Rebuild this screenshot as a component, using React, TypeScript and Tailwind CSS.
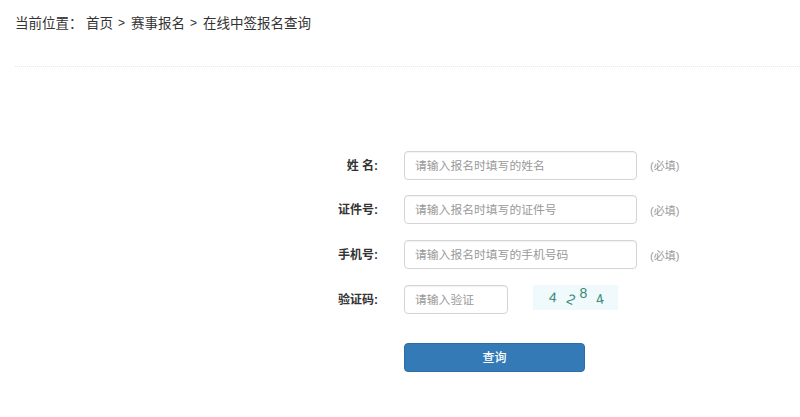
const fontStack = { fontFamily: '"Liberation Sans", "Noto Sans CJK SC", sans-serif' };

const rows = [
  { label: "姓 名:", placeholder: "请输入报名时填写的姓名", gap: "mt-0", note: "mt-[2px]" },
  { label: "证件号:", placeholder: "请输入报名时填写的证件号", gap: "mt-[15px]", note: "mt-[3px]" },
  { label: "手机号:", placeholder: "请输入报名时填写的手机号码", gap: "mt-4", note: "mt-[3px]" },
];

const inputClass =
  "ml-[26px] h-[29px] rounded-[4px] border border-[#d4d4d4] px-[10px] text-[11.8px] text-[#555] shadow-[inset_0_1px_1px_rgba(0,0,0,0.05)] placeholder:text-[#999]";

function Label({ children }: { children: React.ReactNode }) {
  return <label className="w-[378px] shrink-0 text-right text-xs font-bold text-[#333]">{children}</label>;
}

export default function App() {
  return (
    <div className="h-[417px] w-[800px] overflow-hidden bg-white" style={fontStack}>
      <div className="ml-[15px] flex h-[67px] items-start border-b border-dotted border-[#e8e8e8] pt-[15px] text-[13.5px] leading-[18px] text-[#333]">
        <span className="w-[71px]">当前位置：</span>
        <span>首页</span>
        <span className="mr-[6px] ml-[5px] text-xs">&gt;</span>
        <span>赛事报名</span>
        <span className="mr-[6px] ml-[5px] text-xs">&gt;</span>
        <span>在线中签报名查询</span>
      </div>

      <form className="flex flex-col pt-[84px]">
        {rows.map((row) => (
          <div key={row.label} className={`flex h-[29px] items-center ${row.gap}`}>
            <Label>{row.label}</Label>
            <input readOnly placeholder={row.placeholder} className={`${inputClass} w-[233px]`} />
            <span className={`ml-[13px] text-[11px] text-[#999] ${row.note}`}>(必填)</span>
          </div>
        ))}
        <div className="mt-4 flex h-[29px] items-center">
          <Label>验证码:</Label>
          <input readOnly placeholder="请输入验证" className={`${inputClass} w-[104px]`} />
          <div className="mb-1 ml-[25px] flex h-[25px] w-[85px] items-center bg-[#f0f9fb] pl-[16px] text-[14px] text-[#37887a]">
            <span className="rotate-[5deg]">4</span>
            <span className="mt-1 ml-[10px] rotate-[25deg]">2</span>
            <span className="-mt-2 ml-[5px]">8</span>
            <span className="mt-1 ml-[9px] rotate-[-10deg]">4</span>
          </div>
        </div>
        <button
          type="button"
          className="mt-[29px] ml-[404px] h-[29px] w-[181px] rounded-[4px] border border-[#2e6da4] bg-[#337ab7] text-xs font-medium text-white"
        >
          查询
        </button>
      </form>
    </div>
  );
}
